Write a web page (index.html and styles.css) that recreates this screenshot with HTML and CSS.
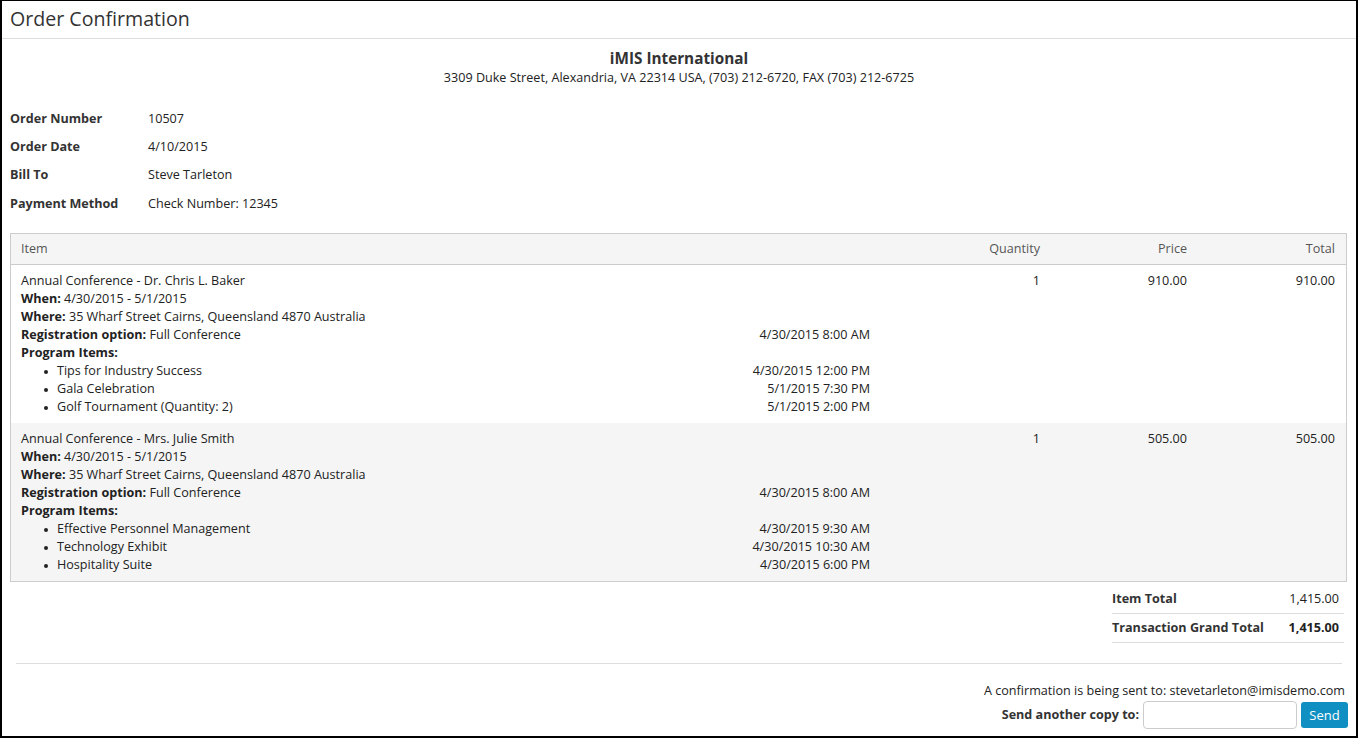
FILE: index.html
```html
<!DOCTYPE html>
<html lang="en">
  <head>
    <meta charset="UTF-8" />
    <title>Order Confirmation</title>
    <link rel="stylesheet" href="styles.css">
  </head>
  <body>
    <div class="page">
      <h1 class="page-title">Order Confirmation</h1>

      <div class="content">
        <div class="company">
          <div class="company-name">iMIS International</div>
          <div class="company-address">3309 Duke Street, Alexandria, VA 22314 USA, (703) 212-6720, FAX (703) 212-6725</div>
        </div>

        <div class="details">
          <div class="detail-row"><span class="detail-label">Order Number</span><span>10507</span></div>
          <div class="detail-row"><span class="detail-label">Order Date</span><span>4/10/2015</span></div>
          <div class="detail-row"><span class="detail-label">Bill To</span><span>Steve Tarleton</span></div>
          <div class="detail-row"><span class="detail-label">Payment Method</span><span>Check Number: 12345</span></div>
        </div>

        <table class="items">
          <thead>
            <tr>
              <th class="col-item">Item</th>
              <th class="col-num col-qty">Quantity</th>
              <th class="col-num col-price">Price</th>
              <th class="col-num col-total">Total</th>
            </tr>
          </thead>
          <tbody>
            <tr>
              <td class="col-item">
                <div class="line">Annual Conference - Dr. Chris L. Baker</div>
                <div class="line"><b>When:</b> 4/30/2015 - 5/1/2015</div>
                <div class="line"><b>Where:</b> 35 Wharf Street Cairns, Queensland 4870 Australia</div>
                <div class="line split"><span><b>Registration option:</b> Full Conference</span><span>4/30/2015 8:00 AM</span></div>
                <div class="line"><b>Program Items:</b></div>
                <ul class="program">
                  <li class="line split"><span>Tips for Industry Success</span><span>4/30/2015 12:00 PM</span></li>
                  <li class="line split"><span>Gala Celebration</span><span>5/1/2015 7:30 PM</span></li>
                  <li class="line split"><span>Golf Tournament (Quantity: 2)</span><span>5/1/2015 2:00 PM</span></li>
                </ul>
              </td>
              <td class="col-num">1</td>
              <td class="col-num">910.00</td>
              <td class="col-num">910.00</td>
            </tr>
            <tr class="alt">
              <td class="col-item">
                <div class="line">Annual Conference - Mrs. Julie Smith</div>
                <div class="line"><b>When:</b> 4/30/2015 - 5/1/2015</div>
                <div class="line"><b>Where:</b> 35 Wharf Street Cairns, Queensland 4870 Australia</div>
                <div class="line split"><span><b>Registration option:</b> Full Conference</span><span>4/30/2015 8:00 AM</span></div>
                <div class="line"><b>Program Items:</b></div>
                <ul class="program">
                  <li class="line split"><span>Effective Personnel Management</span><span>4/30/2015 9:30 AM</span></li>
                  <li class="line split"><span>Technology Exhibit</span><span>4/30/2015 10:30 AM</span></li>
                  <li class="line split"><span>Hospitality Suite</span><span>4/30/2015 6:00 PM</span></li>
                </ul>
              </td>
              <td class="col-num">1</td>
              <td class="col-num">505.00</td>
              <td class="col-num">505.00</td>
            </tr>
          </tbody>
        </table>

        <div class="totals">
          <div class="total-row"><span class="total-label">Item Total</span><span>1,415.00</span></div>
          <div class="total-row grand"><span class="total-label">Transaction Grand Total</span><span>1,415.00</span></div>
        </div>

        <hr class="divider" />

        <div class="confirm">
          <div class="confirm-text">A confirmation is being sent to: stevetarleton@imisdemo.com</div>
          <div class="send-row">
            <label for="copyEmail">Send another copy to:</label>
            <input type="text" id="copyEmail" />
            <button class="send-btn">Send</button>
          </div>
        </div>
      </div>
    </div>
  </body>
</html>
```

FILE: styles.css
```css
html,
body {
  margin: 0;
  height: 100%;
}

body {
  font-family: "Open Sans", Arial, sans-serif;
  font-size: 12.6px;
  line-height: 18px;
  color: #222;
  background: white;
}

.page {
  box-sizing: border-box;
  height: 738px;
  border: 2px solid #000;
  border-top-width: 1px;
  overflow: hidden;
}

.page-title {
  margin: 0;
  height: 37px;
  padding: 0 8px;
  font-size: 19.6px;
  font-weight: normal;
  line-height: 36px;
  color: #333;
  border-bottom: 1px solid #ddd;
}

.content {
  padding: 0 8px;
}

.company {
  text-align: center;
  margin-top: 9px;
}

.company-name {
  font-size: 15.3px;
  font-weight: bold;
  line-height: 20px;
  color: #333;
}

.company-address {
  margin-top: 1px;
}

.details {
  margin-top: 23px;
}

.detail-row {
  display: flex;
  height: 28px;
  line-height: 18px;
}

.detail-row:nth-child(3) {
  height: 29px;
}

.detail-row:last-child {
  height: 30px;
}

.detail-label {
  width: 138px;
  font-weight: bold;
  color: #333;
}

.items {
  width: 1337px;
  margin-top: 8px;
  border-collapse: collapse;
  border: 1px solid #ccc;
}

.items th {
  background: #f5f5f5;
  font-weight: normal;
  color: #555;
  height: 30px;
  padding: 0 10px;
  text-align: left;
  border-bottom: 1px solid #ccc;
}

.items td {
  vertical-align: top;
  padding: 7px 10px 7px;
}

.items th.col-num,
.items td.col-num {
  text-align: right;
}

.col-item {
  width: 849px;
}

.col-qty {
  width: 150px;
}

.col-price {
  width: 127px;
}

.col-total {
  width: 128px;
}

.items th.col-total,
.items tr td:last-child {
  padding-right: 11px;
}

.items tr.alt td {
  background: #f5f5f5;
}

.line {
  height: 18px;
}

.split {
  display: flex;
  justify-content: space-between;
}

.program {
  margin: 0;
  padding-left: 36px;
}

.program li {
  display: flex;
  list-style: none;
  position: relative;
}

.program li::before {
  content: "";
  position: absolute;
  left: -13px;
  top: 8px;
  width: 4px;
  height: 4px;
  border-radius: 50%;
  background: #222;
}

.totals {
  width: 232px;
  margin: 3px 4px 0 auto;
}

.total-row {
  display: flex;
  justify-content: space-between;
  height: 28px;
  line-height: 28px;
  padding-right: 5px;
  border-bottom: 1px solid #ddd;
}

.total-label {
  font-weight: bold;
  color: #333;
}

.grand {
  font-weight: bold;
}

.divider {
  margin: 20px 6px 0;
  border: none;
  border-top: 1px solid #ddd;
}

.confirm {
  text-align: right;
  margin-top: 18px;
  padding-right: 3px;
}

.send-row {
  display: flex;
  justify-content: flex-end;
  align-items: center;
  gap: 4px;
  margin-top: 1px;
  margin-right: -3px;
}

.send-row label {
  font-weight: bold;
  color: #333;
}

.send-row input {
  box-sizing: border-box;
  width: 154px;
  height: 28px;
  border: 1px solid #ccc;
  border-radius: 4px;
  font-family: inherit;
}

.send-btn {
  box-sizing: border-box;
  height: 26px;
  width: 47px;
  padding: 0;
  border: none;
  border-radius: 3px;
  background: #1090c2;
  color: white;
  font-family: inherit;
  font-size: 13px;
  cursor: pointer;
}
```
